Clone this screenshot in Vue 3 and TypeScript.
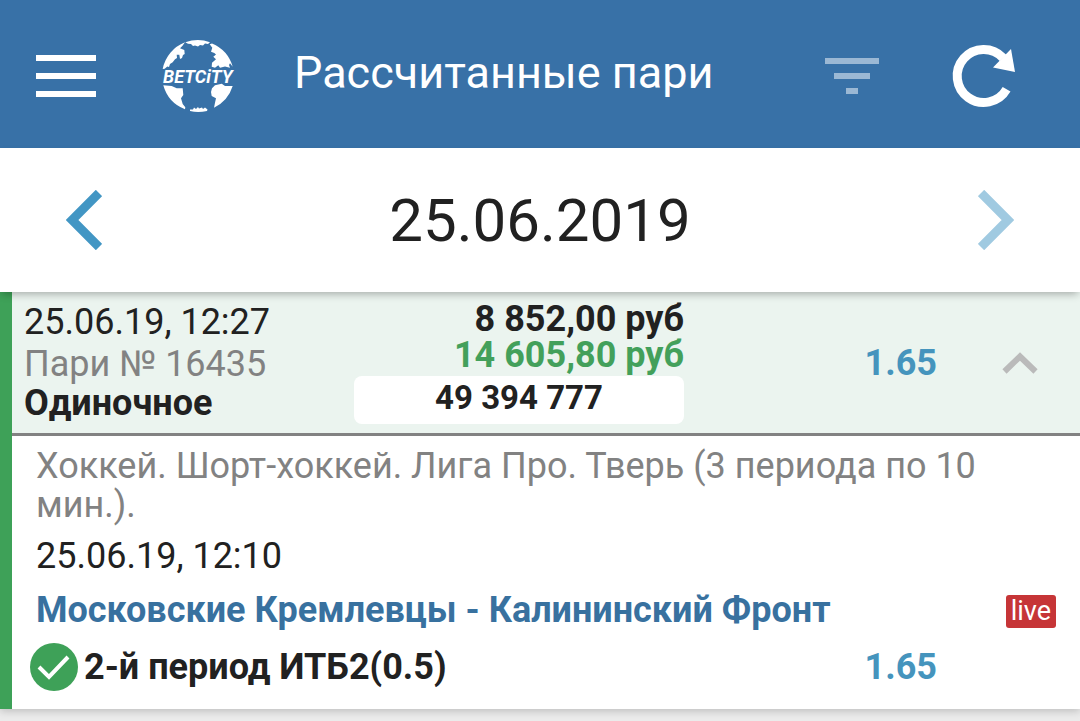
<script setup lang="ts">
import { ref } from 'vue'

interface Bet {
  placedAt: string
  number: string
  kind: string
  stake: string
  payout: string
  ticket: string
  odds: string
  tournament: string
  startsAt: string
  teams: string
  outcome: string
  outcomeOdds: string
}

const title = 'Рассчитанные пари'
const day = '25.06.2019'
const open = ref(true)
const bet: Bet = {
  placedAt: '25.06.19, 12:27',
  number: 'Пари № 16435',
  kind: 'Одиночное',
  stake: '8 852,00 руб',
  payout: '14 605,80 руб',
  ticket: '49 394 777',
  odds: '1.65',
  tournament: 'Хоккей. Шорт-хоккей. Лига Про. Тверь (3 периода по 10 мин.).',
  startsAt: '25.06.19, 12:10',
  teams: 'Московские Кремлевцы - Калининский Фронт',
  outcome: '2-й период ИТБ2(0.5)',
  outcomeOdds: '1.65',
}
</script>

<template>
  <div class="page">
    <header class="topbar">
      <button class="icon-btn" type="button" aria-label="Меню">
        <svg width="60" height="42" viewBox="0 0 60 42" fill="#fff">
          <path d="M0 0h60v6H0zM0 18h60v6H0zM0 36h60v6H0z" />
        </svg>
      </button>
      <a class="logo" href="#" aria-label="BETCITY">
        <svg width="76" height="72" viewBox="0 0 76 72" fill="#fff">
          <path d="M0.700 29A36 36 0 0 1 23 2.300L20.300 6 18 8.300 22.300 10 22.700 14 21 15 20 18 18 19 17.300 14.700 14.700 14.700 15 18 13 19.300 10.700 22.300 8 24 7 27 5.300 26.500 2.700 28.700Z" />
          <path d="M23.300 2.200Q36-2 48 2.200L46 4 43 3.500 41 5.500 38 5 36 6.500 33 5.500 31 6 29 4 26 3.800Z" />
          <path d="M47.700 4.300L50 3.500A36 36 0 0 1 70.700 26.700L68 23.300 67 25 68 27.700 63 26.500 58 27.700 56.300 25.300 53 27.700 49.700 26.700 50 22.700 54 19.300 51.300 16.700 54 14.500 52.300 13 49 11.700 50.300 7.700Z" />
          <path d="M1.300 45.300L9.700 46 14.700 48.300 20.700 48.300 21.300 55 19 58.300 20.700 64 23.300 67.300 23 69.300A36 36 0 0 1 1.300 45.300Z" />
          <path d="M53 45.300L59.700 43.800 63 46 70.700 46A36 36 0 0 1 52 67.700L53 62.700 54 58.300 49.700 56 49 52 50 48.300Z" />
          <path d="M28 69.500L31 69.500 32 67.500 34 69 36 67 37 68.500 40 67.500 41 69 43 67.500 45.500 69.500 45 71Q36 73 28 71Z" />
          <text x="1" y="43" class="logo-text">BETCiTY</text>
        </svg>
      </a>
      <h1 class="title">{{ title }}</h1>
      <button class="icon-btn filter" type="button" aria-label="Фильтр">
        <svg width="54" height="36" viewBox="0 0 54 36" fill="#9bb8d4">
          <path d="M0 0h54v6H0zM9 15h36v6H9zM21 30h12v6H21z" />
        </svg>
      </button>
      <button class="icon-btn" type="button" aria-label="Обновить">
        <svg width="68" height="68" viewBox="0 0 68 68">
          <path d="M56.600 47.300A26.500 26.500 0 1 1 53 15.800" fill="none" stroke="#fff" stroke-width="9" />
          <path d="M61 7L65 30 43 25.500Z" fill="#fff" />
        </svg>
      </button>
    </header>

    <nav class="daybar" aria-label="Дата">
      <button class="icon-btn" type="button" aria-label="Предыдущий день">
        <svg width="36" height="60" viewBox="0 0 36 60" fill="none" stroke="#4296c4" stroke-width="9">
          <path d="M33 3L6 30 33 57" />
        </svg>
      </button>
      <time class="day" datetime="2019-06-25">{{ day }}</time>
      <button class="icon-btn" type="button" aria-label="Следующий день">
        <svg width="36" height="60" viewBox="0 0 36 60" fill="none" stroke="#a0cae1" stroke-width="9">
          <path d="M3 3L30 30 3 57" />
        </svg>
      </button>
    </nav>

    <main class="list">
      <article class="bet">
        <section class="summary">
          <div class="info">
            <span>{{ bet.placedAt }}</span>
            <span class="muted">{{ bet.number }}</span>
            <strong class="kind">{{ bet.kind }}</strong>
          </div>
          <div class="money">
            <strong>{{ bet.stake }}</strong>
            <strong class="win">{{ bet.payout }}</strong>
            <strong class="ticket">{{ bet.ticket }}</strong>
          </div>
          <strong class="odds">{{ bet.odds }}</strong>
          <button
            class="icon-btn toggle"
            type="button"
            aria-label="Свернуть"
            :aria-expanded="open"
            @click="open = !open"
          >
            <svg width="36" height="22" viewBox="0 0 36 22" fill="none" stroke="#bababa" stroke-width="6">
              <path d="M2.500 19.500L18 4.500 33.500 19.500" />
            </svg>
          </button>
        </section>

        <section v-if="open" class="details">
          <p class="tournament">{{ bet.tournament }}</p>
          <p class="starts">{{ bet.startsAt }}</p>
          <div class="match">
            <a class="teams" href="#">{{ bet.teams }}</a>
            <span class="live">live</span>
          </div>
          <div class="result">
            <svg width="48" height="48" viewBox="0 0 48 48">
              <circle cx="24" cy="24" r="24" fill="#3ea158" />
              <path d="M9 24L19 34 38 14" fill="none" stroke="#fff" stroke-width="4" />
            </svg>
            <strong class="outcome">{{ bet.outcome }}</strong>
            <strong class="odds">{{ bet.outcomeOdds }}</strong>
          </div>
        </section>
      </article>
    </main>
  </div>
</template>

<style>
body {
  margin: 0;
  background: #ebebeb;
}
</style>

<style scoped>
.page {
  display: flex;
  flex-direction: column;
  min-height: 100vh;
  font-family: Roboto, "Liberation Sans", sans-serif;
  font-size: 36px;
  color: #212121;
}
.icon-btn {
  display: flex;
  padding: 0;
  border: 0;
  background: none;
  cursor: pointer;
}
.topbar {
  display: flex;
  align-items: center;
  box-sizing: border-box;
  height: 148px;
  padding: 4px 62px 0 36px;
  background: #3871a7;
}
.logo {
  display: flex;
  margin: 0 56px 0 66px;
}
.logo-text {
  font-size: 18px;
  font-style: italic;
  font-weight: 700;
}
.title {
  flex: 1;
  margin: 0;
  padding-bottom: 6px;
  font-size: 45px;
  font-weight: 400;
  line-height: 52px;
  white-space: nowrap;
  color: #fff;
}
.filter {
  margin-right: 71px;
}
.daybar {
  position: relative;
  z-index: 1;
  display: flex;
  align-items: center;
  justify-content: space-between;
  height: 144px;
  padding: 0 66px;
  background: #fff;
  box-shadow: 0 4px 8px -2px rgba(0, 0, 0, 0.3);
}
.day {
  padding-top: 2px;
  font-size: 60px;
  line-height: 72px;
}
.list {
  display: flex;
  flex-direction: column;
}
.bet {
  border-left: 12px solid #3ea158;
  background: #fff;
  box-shadow: 0 2px 8px rgba(0, 0, 0, 0.2);
}
.summary {
  display: grid;
  grid-template-columns: 1fr 1fr 276px 120px;
  padding: 9px 0 9px 12px;
  border-bottom: 3px solid #828282;
  background: #ebf4ef;
}
.info {
  display: flex;
  flex-direction: column;
  line-height: 42px;
}
.muted {
  color: #828282;
}
.kind {
  line-height: 36px;
}
.money {
  display: flex;
  flex-direction: column;
  line-height: 36px;
  text-align: right;
}
.win {
  color: #43a05b;
}
.ticket {
  height: 48px;
  margin-top: 3px;
  border-radius: 8px;
  background: #fff;
  font-size: 33px;
  line-height: 44px;
  text-align: center;
}
.odds {
  align-self: center;
  justify-self: end;
  padding-right: 23px;
  line-height: 44px;
  color: #4594bd;
}
.toggle {
  align-self: center;
  justify-self: center;
}
.details {
  display: flex;
  flex-direction: column;
  padding: 11px 24px 18px;
}
.tournament {
  margin: 0;
  line-height: 39px;
  color: #828282;
}
.starts {
  margin: 7px 0 6px;
  line-height: 48px;
}
.match {
  display: flex;
  align-items: center;
  justify-content: space-between;
  line-height: 48px;
}
.teams {
  font-weight: 700;
  color: #38719f;
  text-decoration: none;
}
.live {
  margin-top: 2px;
  padding: 0 5px;
  border-radius: 3px;
  background: #c63537;
  font-size: 27px;
  line-height: 33px;
  color: #fff;
}
.result {
  display: flex;
  align-items: center;
  gap: 6px;
  margin: 9px 0 0 -6px;
  padding-right: 96px;
  line-height: 48px;
}
.outcome {
  flex: 1;
}
</style>
